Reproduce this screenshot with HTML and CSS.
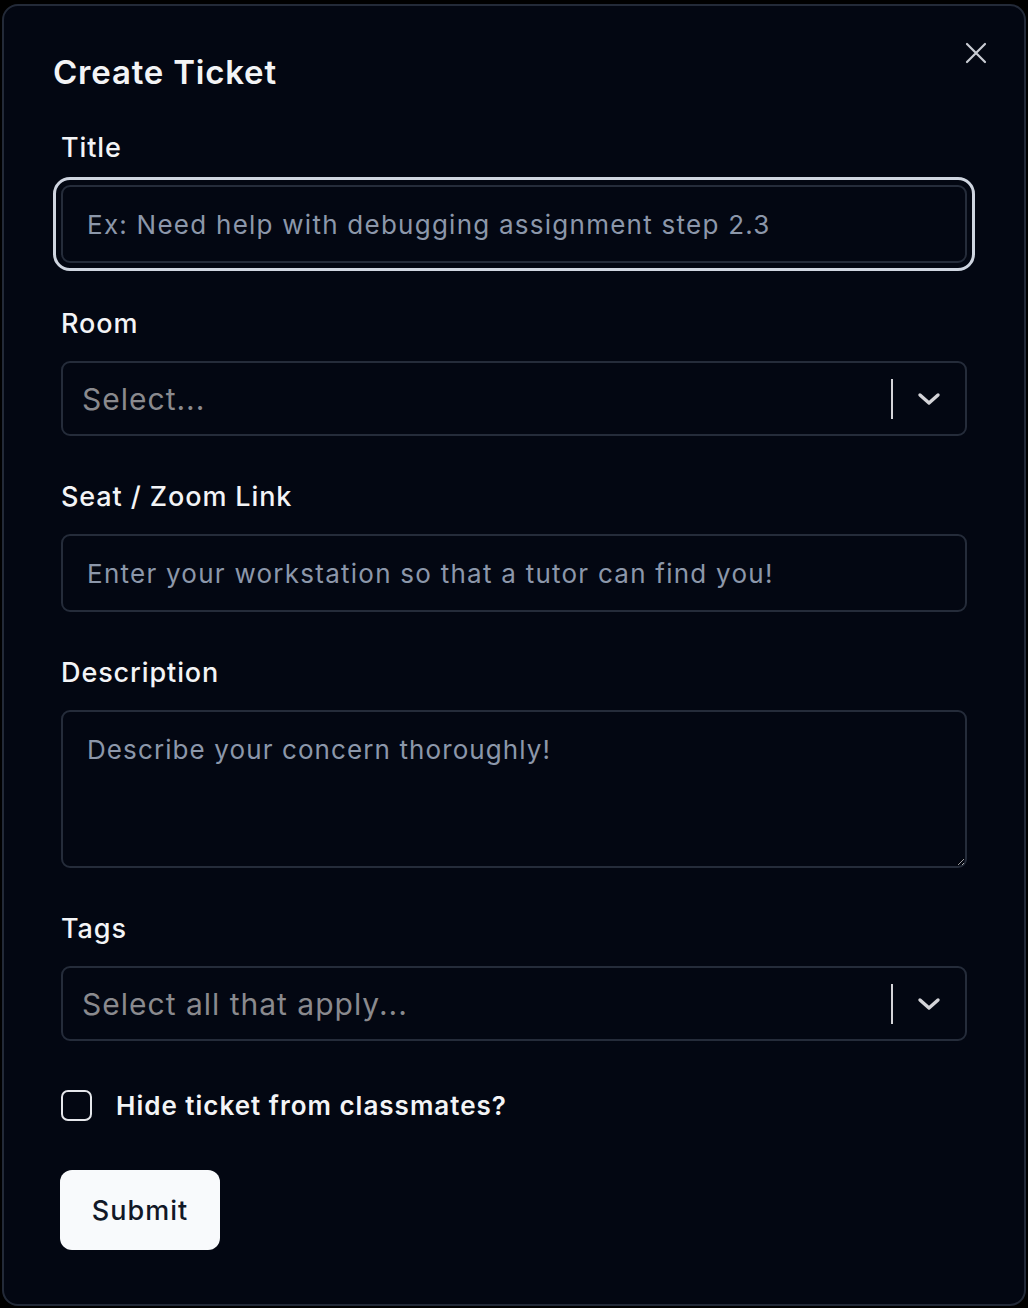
FILE: index.html
```html
<!DOCTYPE html>
<html lang="en">
<head>
    <meta charset="UTF-8">
    <meta name="viewport" content="width=device-width, initial-scale=1.0">
    <title>Create Ticket</title>
    <link rel="stylesheet" href="styles.css">
</head>
<body>
    <div class="modal">
        <button class="close-button" aria-label="Close">
            <svg width="22" height="22" viewBox="0 0 22 22">
                <path d="M2 2 L20 20 M20 2 L2 20" stroke="currentColor" stroke-width="2.2" stroke-linecap="round"/>
            </svg>
        </button>
        <h2 class="modal-title">Create Ticket</h2>
        <form class="ticket-form">
            <div class="field">
                <label for="title">Title</label>
                <input id="title" class="text-input focused" type="text" placeholder="Ex: Need help with debugging assignment step 2.3">
            </div>
            <div class="field">
                <label>Room</label>
                <div class="select">
                    <span class="select-placeholder">Select...</span>
                    <span class="select-divider"></span>
                    <svg class="select-chevron" width="24" height="14" viewBox="0 0 24 14">
                        <path d="M3 3 L12 11 L21 3" fill="none" stroke="currentColor" stroke-width="3.4" stroke-linecap="round" stroke-linejoin="round"/>
                    </svg>
                </div>
            </div>
            <div class="field">
                <label for="seat">Seat / Zoom Link</label>
                <input id="seat" class="text-input" type="text" placeholder="Enter your workstation so that a tutor can find you!">
            </div>
            <div class="field">
                <label for="description">Description</label>
                <textarea id="description" class="text-area" placeholder="Describe your concern thoroughly!"></textarea>
            </div>
            <div class="field">
                <label>Tags</label>
                <div class="select">
                    <span class="select-placeholder">Select all that apply...</span>
                    <span class="select-divider"></span>
                    <svg class="select-chevron" width="24" height="14" viewBox="0 0 24 14">
                        <path d="M3 3 L12 11 L21 3" fill="none" stroke="currentColor" stroke-width="3.4" stroke-linecap="round" stroke-linejoin="round"/>
                    </svg>
                </div>
            </div>
            <label class="checkbox-row">
                <span class="checkbox"></span>
                <span class="checkbox-label">Hide ticket from classmates?</span>
            </label>
            <div>
                <button type="button" class="submit-button">Submit</button>
            </div>
        </form>
    </div>
</body>
</html>
```

FILE: styles.css
```css
body {
    font-family: 'Inter', 'Noto Sans', sans-serif;
    background-color: #000;
    color: #f3f4f6;
    margin: 0;
    padding: 0;
}

.modal {
    position: relative;
    box-sizing: border-box;
    width: 1024px;
    height: 1302px;
    margin: 4px 0 0 2px;
    padding: 46px 56px 0 57px;
    background-color: #030712;
    border: 2px solid #232a38;
    border-radius: 16px;
}

.close-button {
    position: absolute;
    top: 36px;
    right: 37px;
    padding: 0;
    background: none;
    border: none;
    color: #c9ccd3;
    cursor: pointer;
}

.modal-title {
    margin: 0 0 0 -8px;
    font-size: 33px;
    font-weight: 600;
    line-height: 40px;
    color: #f3f4f6;
    letter-spacing: 0.8px;
}

.ticket-form {
    display: flex;
    flex-direction: column;
    margin-top: 40px;
}

.field {
    display: flex;
    flex-direction: column;
    margin-bottom: 45px;
}

.field label {
    font-size: 27px;
    font-weight: 500;
    line-height: 32px;
    letter-spacing: 0.9px;
    margin-bottom: 21px;
    color: #f3f4f6;
}

.text-input {
    box-sizing: border-box;
    width: 906px;
    height: 78px;
    padding: 0 24px;
    font-family: inherit;
    font-size: 26px;
    letter-spacing: 1.25px;
    color: #f3f4f6;
    background-color: #030712;
    border: 2px solid #252c3a;
    border-radius: 9px;
}

.text-input::placeholder,
.text-area::placeholder {
    color: #8c97aa;
}

.text-input.focused {
    outline: 3px solid #cfd5e0;
    outline-offset: 5px;
}

.text-area {
    box-sizing: border-box;
    width: 906px;
    height: 158px;
    padding: 22px 24px;
    font-family: inherit;
    font-size: 26px;
    letter-spacing: 1.1px;
    color: #f3f4f6;
    background-color: #030712;
    border: 2px solid #252c3a;
    border-radius: 9px;
    resize: vertical;
}

.select {
    box-sizing: border-box;
    display: flex;
    align-items: center;
    width: 906px;
    height: 75px;
    padding: 0 24px 0 19px;
    border: 2px solid #252c3a;
    border-radius: 9px;
}

.select-placeholder {
    flex: 1;
    font-size: 30px;
    letter-spacing: 1px;
    color: #8a8a8e;
}

.select-divider {
    width: 2px;
    height: 40px;
    background-color: #d4d4d8;
    margin-right: 24px;
}

.select-chevron {
    color: #d4d4d8;
}

.checkbox-row {
    display: flex;
    align-items: center;
    gap: 24px;
    margin-top: 4px;
}

.checkbox {
    box-sizing: border-box;
    width: 31px;
    height: 31px;
    border: 2px solid #e5e7eb;
    border-radius: 7px;
}

.checkbox-label {
    font-size: 26px;
    font-weight: 600;
    letter-spacing: 1px;
    line-height: 31px;
    color: #f3f4f6;
}

.submit-button {
    margin-top: 49px;
    margin-left: -1px;
    width: 160px;
    height: 80px;
    font-family: inherit;
    font-size: 27px;
    font-weight: 500;
    letter-spacing: 1px;
    color: #111827;
    background-color: #f8fafc;
    border: none;
    border-radius: 12px;
    cursor: pointer;
}
```
